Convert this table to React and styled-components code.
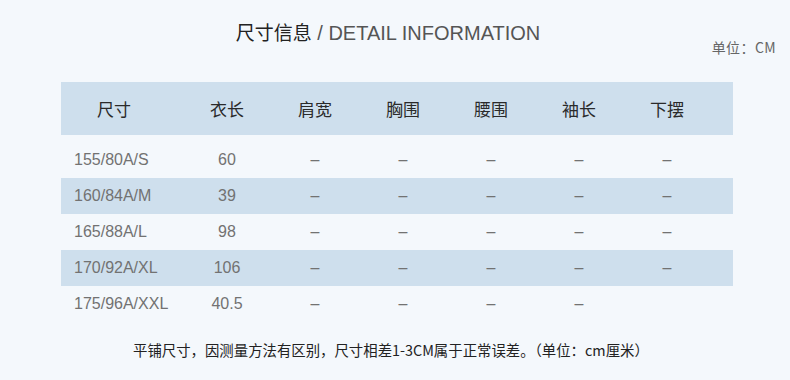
import styled, { createGlobalStyle } from "styled-components";

const GlobalStyle = createGlobalStyle`
  html, body {
    margin: 0;
    padding: 0;
    background: #f4f8fc;
  }
  body {
    font-family: "Liberation Sans", "Noto Sans CJK SC", sans-serif;
  }
`;

const columns = ["尺寸", "衣长", "肩宽", "胸围", "腰围", "袖长", "下摆"];

const rows = [
  { size: "155/80A/S", length: "60", rest: ["–", "–", "–", "–", "–"] },
  { size: "160/84A/M", length: "39", rest: ["–", "–", "–", "–", "–"] },
  { size: "165/88A/L", length: "98", rest: ["–", "–", "–", "–", "–"] },
  { size: "170/92A/XL", length: "106", rest: ["–", "–", "–", "–", "–"] },
  { size: "175/96A/XXL", length: "40.5", rest: ["–", "–", "–", "–", ""] },
];

const App = () => {
  return (
    <>
      <GlobalStyle />
      <Page>
        <TitleBar>
          <span />
          <Title>
            尺寸信息<TitleEn> / DETAIL INFORMATION</TitleEn>
          </Title>
          <Unit>单位：CM</Unit>
        </TitleBar>

        <Table>
          <HeadRow>
            {columns.map((col, i) => (
              <HeadCell key={col} first={i === 0}>
                {col}
              </HeadCell>
            ))}
          </HeadRow>
          {rows.map((row, i) => (
            <Row key={row.size} shaded={i % 2 === 1}>
              <Cell first>{row.size}</Cell>
              <Cell>{row.length}</Cell>
              {row.rest.map((v, j) => (
                <Cell key={j}>{v}</Cell>
              ))}
            </Row>
          ))}
        </Table>

        <Note>平铺尺寸，因测量方法有区别，尺寸相差1-3CM属于正常误差。（单位：cm厘米）</Note>
      </Page>
    </>
  );
};

const Page = styled.div`
  width: 790px;
  height: 380px;
  box-sizing: border-box;
  padding-top: 20px;
`;

const TitleBar = styled.div`
  display: grid;
  grid-template-columns: 1fr auto 1fr;
  padding-right: 14px;
  height: 34px;
`;

const Title = styled.div`
  font-family: "Noto Sans CJK SC", sans-serif;
  font-size: 19px;
  line-height: 24px;
  color: #222;
  white-space: nowrap;
`;

const TitleEn = styled.span`
  font-family: "Liberation Sans", sans-serif;
  font-size: 20px;
  color: #555;
`;

const Unit = styled.div`
  justify-self: end;
  align-self: end;
  font-family: "Noto Sans CJK SC", sans-serif;
  font-size: 14px;
  line-height: 18px;
  color: #666;
  margin-bottom: -2px;
  letter-spacing: 0.4px;
  white-space: nowrap;
`;

const Table = styled.div`
  margin: 28px 0 0 61px;
  width: 672px;
`;

const HeadRow = styled.div`
  display: grid;
  grid-template-columns: 122px repeat(6, 88px) 1fr;
  align-items: center;
  height: 53px;
  margin-bottom: 7px;
  background: #cedfed;
`;

const HeadCell = styled.div`
  font-family: "Noto Sans CJK SC", sans-serif;
  font-size: 17px;
  color: #2a2a2a;
  text-align: ${(props) => (props.first ? "left" : "center")};
  padding-left: ${(props) => (props.first ? "36px" : "0")};
`;

const Row = styled.div`
  display: grid;
  grid-template-columns: 122px repeat(6, 88px) 1fr;
  align-items: center;
  height: 36px;
  background: ${(props) => (props.shaded ? "#cedfed" : "transparent")};
`;

const Cell = styled.div`
  font-family: "Liberation Sans", sans-serif;
  font-size: 16px;
  color: #727272;
  text-align: ${(props) => (props.first ? "left" : "center")};
  padding-left: ${(props) => (props.first ? "13px" : "0")};
  white-space: nowrap;
`;

const Note = styled.div`
  margin-top: 18px;
  padding-left: 133px;
  font-family: "Noto Sans CJK SC", sans-serif;
  font-size: 14.4px;
  line-height: 20px;
  color: #222;
  white-space: nowrap;
`;

export default App;
